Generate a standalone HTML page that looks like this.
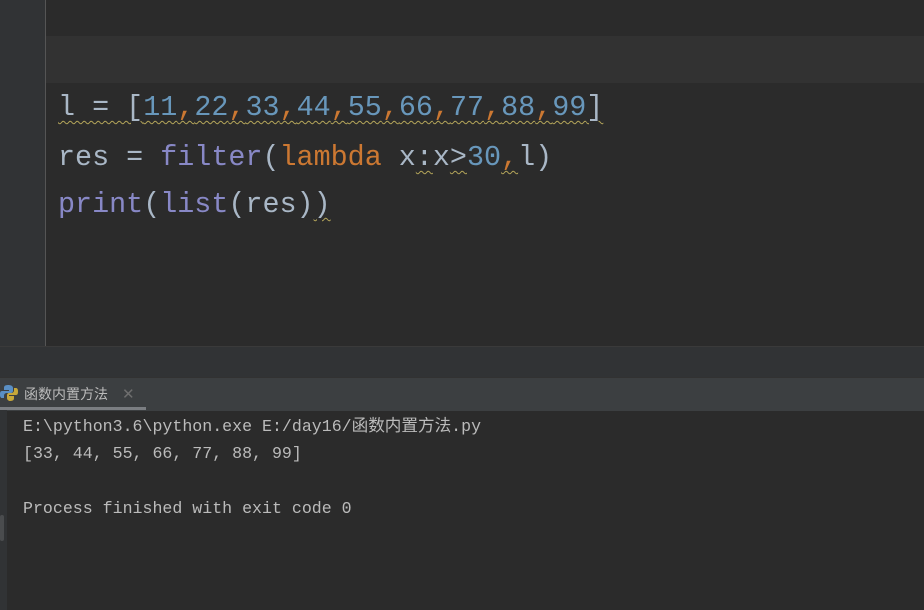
<!DOCTYPE html>
<html><head><meta charset="utf-8"><style>
body{margin:0;width:924px;height:610px;background:#2b2b2b;position:relative;overflow:hidden;font-family:"Liberation Mono","Noto Sans CJK SC",monospace}
div{position:absolute}
.g{left:0;top:0;width:45px;height:346px;background:#313335}
.gl{left:45px;top:0;width:1px;height:346px;background:#555555}
.hl{left:46px;top:36px;width:878px;height:47px;background:#323232}
.code{left:58px;font-size:28.4px;color:#a9b7c6;white-space:pre;line-height:47px}
.n{color:#6897bb}.o{color:#cc7832}.f{color:#8888c6}
.w{text-decoration:underline wavy #b5a65a;text-decoration-thickness:1px;text-underline-offset:5px}
.sep{left:0;top:346px;width:924px;height:31px;background:#313335;border-top:1px solid #3a3a3a}
.tab{left:0;top:377px;width:924px;height:33px;background:#3c3f41;border-top:1px solid #323232}
.ul{left:0;top:407px;width:146px;height:3px;background:#7b7e82}
.cons{left:23px;top:413px;font-size:16.6px;color:#bbbbbb;white-space:pre;line-height:27.3px}
.cg{left:0;top:410px;width:7px;height:200px;background:#313335}
</style></head><body>
<div class="g"></div><div class="gl"></div><div class="hl"></div>
<div class="code" style="top:84px"><span class="w">l = [<span class="n">11</span><span class="o">,</span><span class="n">22</span><span class="o">,</span><span class="n">33</span><span class="o">,</span><span class="n">44</span><span class="o">,</span><span class="n">55</span><span class="o">,</span><span class="n">66</span><span class="o">,</span><span class="n">77</span><span class="o">,</span><span class="n">88</span><span class="o">,</span><span class="n">99</span>]</span></div>
<div class="code" style="top:134px">res = <span class="f">filter</span>(<span class="o">lambda</span> x<span class="w">:</span>x<span class="w">&gt;</span><span class="n">30</span><span class="o w">,</span>l)</div>
<div class="code" style="top:181px"><span class="f">print</span>(<span class="f">list</span>(res)<span class="w">)</span></div>
<div class="sep"></div>
<div class="tab"></div>
<svg style="position:absolute;left:0;top:384px" width="18" height="18" viewBox="0 0 18 18"><path d="M8 1c-4 0-4 2-4 3v2h5v1H2c-2 0-2 2-2 4s1 3 2 3h2v-2c0-2 1-3 3-3h4c1 0 2-1 2-2V4c0-2-2-3-5-3z" fill="#5a8fc4"/><path d="M10 17c4 0 4-2 4-3v-2H9v-1h7c2 0 2-2 2-4s-1-3-2-3h-2v2c0 2-1 3-3 3H9c-1 0-2 1-2 2v3c0 2 2 3 3 3z" fill="#c8a83a"/></svg>
<div style="left:24px;top:384px;font-family:'Noto Sans CJK SC',sans-serif;font-size:14px;color:#bbbbbb;line-height:20px">函数内置方法</div>
<div style="left:122px;top:384px;font-family:'DejaVu Sans',sans-serif;font-size:15px;color:#6e6e6e;line-height:20px">✕</div>
<div class="ul"></div>
<div class="cg"></div>
<div style="left:0;top:515px;width:4px;height:26px;background:#4a4c4e;border-radius:2px"></div>
<div class="cons">E:\python3.6\python.exe E:/day16/函数内置方法.py
[33, 44, 55, 66, 77, 88, 99]

Process finished with exit code 0</div>
</body></html>
